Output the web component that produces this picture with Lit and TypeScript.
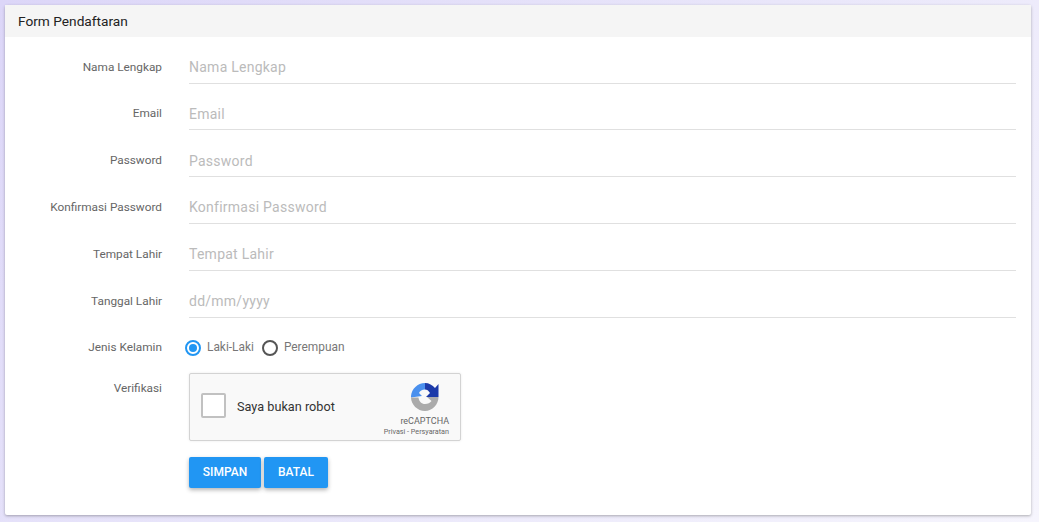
import { LitElement, html, css } from "lit";
import { customElement } from "lit/decorators.js";

const fields = [
  ["Nama Lengkap", "Nama Lengkap"],
  ["Email", "Email"],
  ["Password", "Password"],
  ["Konfirmasi Password", "Konfirmasi Password"],
  ["Tempat Lahir", "Tempat Lahir"],
  ["Tanggal Lahir", "dd/mm/yyyy"],
];

@customElement("app-root")
export class AppRoot extends LitElement {
  static styles = css`
    :host {
      display: block;
      box-sizing: border-box;
      width: 1039px;
      height: 522px;
      padding: 5px 8px 7px 5px;
      background: linear-gradient(135deg, #dcd6f8 0%, #e9e6fa 50%, #f6f5fd 100%);
      font-family: Roboto, "Liberation Sans", sans-serif;
      overflow: hidden;
    }
    .card {
      height: 510px;
      background: #fff;
      box-shadow: 0 1px 3px rgba(0, 0, 0, 0.3);
      border-radius: 2px;
    }
    .head {
      height: 32px;
      box-sizing: border-box;
      padding: 8px 13px 0;
      background: #f5f5f5;
      font-size: 13.7px;
      line-height: 17px;
      color: #222;
    }
    .body {
      padding: 8.6px 15px 0 0;
    }
    .row {
      display: grid;
      grid-template-columns: 157px 1fr;
      column-gap: 27px;
      height: 46.8px;
    }
    .label {
      text-align: right;
      font-size: 11.8px;
      line-height: 14px;
      color: #666;
      padding-top: 14px;
    }
    .input {
      box-sizing: border-box;
      height: 38px;
      border-bottom: 1px solid #e0e0e0;
      font-size: 14px;
      line-height: 16px;
      padding-top: 13.4px;
      color: #bbb;
      letter-spacing: 0.25px;
    }
    .radio-row {
      display: grid;
      grid-template-columns: 157px 1fr;
      column-gap: 27px;
      height: 48px;
      margin-top: -1px;
    }
    .radio-row .label {
      padding-top: 15px;
    }
    .radios {
      display: flex;
      align-items: center;
      height: 43px;
      margin-left: -4px;
      font-size: 11.9px;
      color: #777;
    }
    .radios svg {
      display: block;
      margin-right: 6px;
      margin-top: 2px;
    }
    .radios span {
      margin-right: 8px;
    }
    .captcha-row {
      display: grid;
      grid-template-columns: 157px 1fr;
      column-gap: 27px;
    }
    .captcha-row .label {
      padding-top: 8px;
    }
    .captcha {
      position: relative;
      box-sizing: border-box;
      width: 272px;
      height: 68px;
      background: #f9f9f9;
      border: 1px solid #d3d3d3;
      border-radius: 2px;
      box-shadow: 0 0 3px rgba(0, 0, 0, 0.08);
      display: flex;
      align-items: center;
    }
    .check {
      box-sizing: border-box;
      width: 25px;
      height: 25px;
      margin-left: 11px;
      margin-bottom: 3px;
      background: #fff;
      border: 2px solid #c1c1c1;
      border-radius: 2px;
    }
    .robot {
      margin-left: 11px;
      margin-bottom: 1px;
      font-size: 12.7px;
      color: #333;
    }
    .badge {
      position: absolute;
      right: 11px;
      top: 9px;
      display: flex;
      flex-direction: column;
      align-items: flex-end;
    }
    .badge svg {
      display: block;
      margin-right: 10px;
    }
    .brand {
      font-size: 9px;
      line-height: 11px;
      margin-top: 5px;
      color: #666;
    }
    .terms {
      font-size: 7.2px;
      line-height: 9px;
      margin-top: 0;
      color: #666;
    }
    .actions {
      display: flex;
      gap: 3px;
      margin: 16px 0 0 184px;
    }
    .btn {
      box-sizing: border-box;
      height: 31px;
      background: #2196f3;
      color: #fff;
      font-size: 12px;
      font-weight: 500;
      line-height: 30px;
      text-align: center;
      border-radius: 2px;
      box-shadow: 0 2px 4px rgba(0, 0, 0, 0.3);
    }
    .save { width: 72px; }
    .cancel { width: 64px; }
  `;

  render() {
    return html`
      <div class="card">
        <div class="head">Form Pendaftaran</div>
        <div class="body">
          ${fields.map(
            ([l, p]) => html`<div class="row">
              <div class="label">${l}</div>
              <div class="input">${p}</div>
            </div>`
          )}
          <div class="radio-row">
            <div class="label">Jenis Kelamin</div>
            <div class="radios">
              <svg width="16" height="16" viewBox="0 0 16 16">
                <circle cx="8" cy="8" r="7" fill="none" stroke="#2196f3" stroke-width="2" />
                <circle cx="8" cy="8" r="4" fill="#2196f3" />
              </svg>
              <span>Laki-Laki</span>
              <svg width="16" height="16" viewBox="0 0 16 16">
                <circle cx="8" cy="8" r="7" fill="none" stroke="#555" stroke-width="2" />
              </svg>
              <span>Perempuan</span>
            </div>
          </div>
          <div class="captcha-row">
            <div class="label">Verifikasi</div>
            <div class="captcha">
              <div class="check"></div>
              <div class="robot">Saya bukan robot</div>
              <div class="badge">
                <svg width="28" height="28" viewBox="0 0 28 28">
                  <path d="M14 0 C18 0 21.500 2 24 5 L27.500 1 V14 H15 L19 10 C17.500 7.500 16 6.500 14 6.500 Z" fill="#1c3aa9" />
                  <path d="M14 0 V6.500 C11 6.500 9 8 8 10 L11 13 L0 14.500 V13 C0.500 6 6.500 0 14 0 Z" fill="#4a90ee" />
                  <path d="M0 14.500 H7.500 C8 18.500 10.500 21 14 21 C17 21 19 20 20.500 18 L16 14 H27.500 C27.500 21.500 21.500 28 14 28 C6.500 28 0 21.500 0 14.500 Z" fill="#ababab" />
                </svg>
                <div class="brand">reCAPTCHA</div>
                <div class="terms">Privasi - Persyaratan</div>
              </div>
            </div>
          </div>
          <div class="actions">
            <div class="btn save">SIMPAN</div>
            <div class="btn cancel">BATAL</div>
          </div>
        </div>
      </div>
    `;
  }
}
